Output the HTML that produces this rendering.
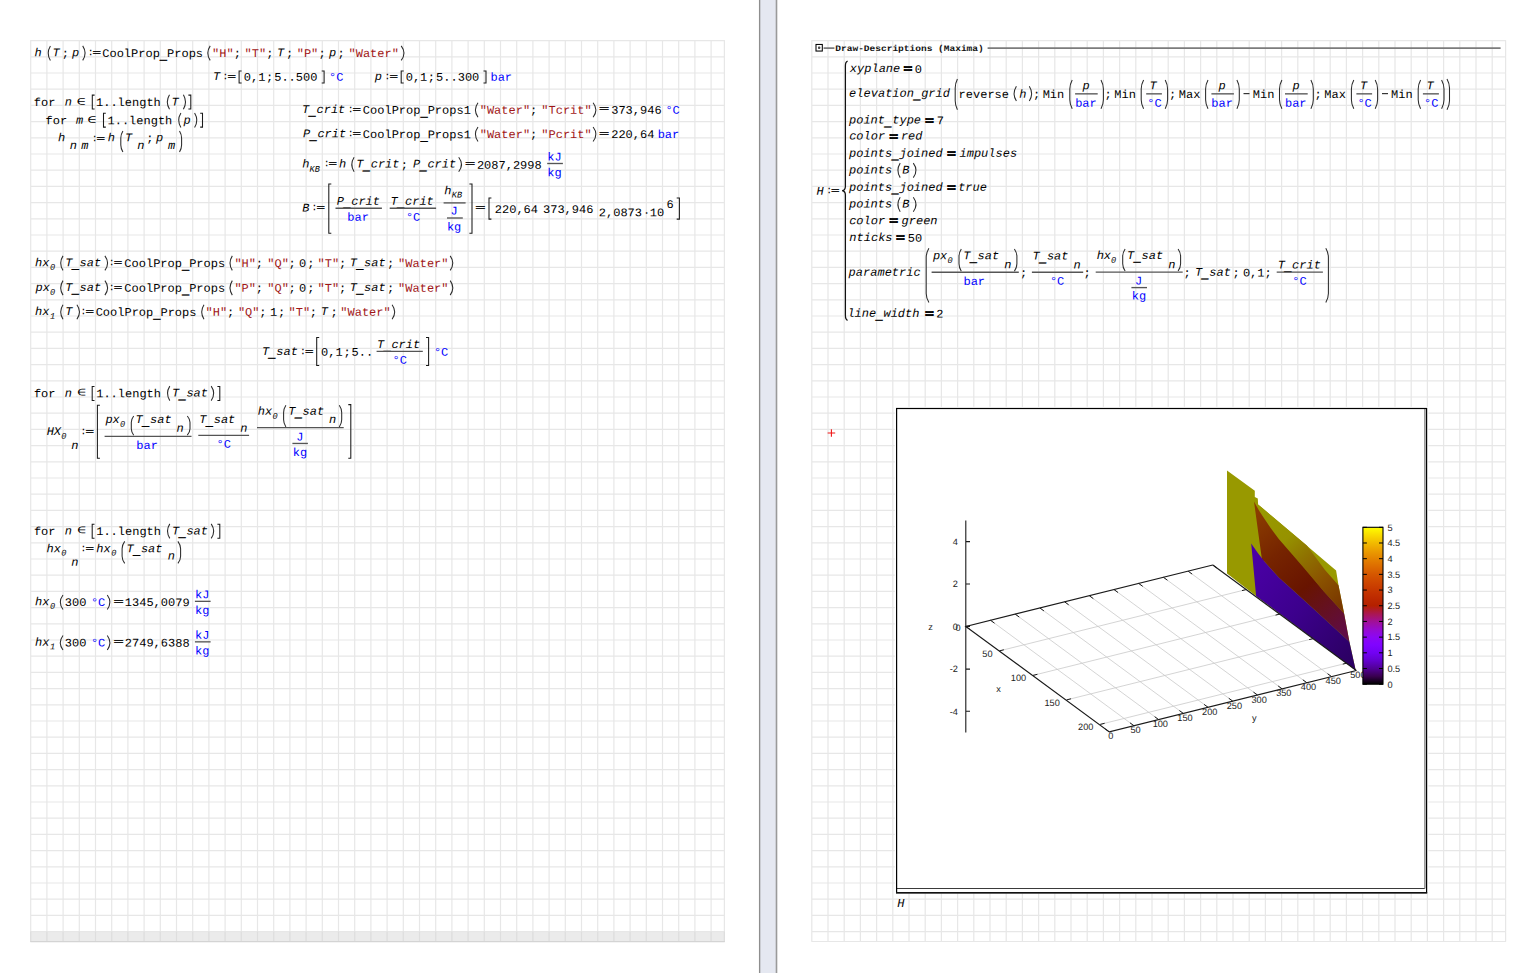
<!DOCTYPE html>
<html lang="en">
<head>
<meta charset="utf-8">
<title>SMath worksheet - CoolProp water properties</title>
<style>
html,body{margin:0;padding:0;background:#fff;}
body{width:1528px;height:973px;overflow:hidden;position:relative;font-family:"Liberation Mono",monospace;}
#divider{position:absolute;left:760px;top:0;width:16px;height:973px;background:#e5e8f1;}
svg{position:absolute;left:0;top:0;}
text{font-family:"Liberation Mono",monospace;font-size:12px;fill:#000;white-space:pre;text-rendering:geometricPrecision;}
.v{font-style:italic;}
.s{fill:#a01515;}
.u{fill:#0000ff;}
.sub{font-style:italic;font-size:8.6px;}
.el{font-family:"DejaVu Sans Mono","Liberation Mono",monospace;font-size:12px;}
.us{stroke:#000;stroke-width:0.45px;}
.fbold{font-weight:bold;}
.fheavy{font-weight:bold;stroke:#000;stroke-width:0.8px;}
.fmed{font-weight:bold;stroke:#000;stroke-width:0.32px;}
.hd{font-weight:bold;font-size:9.45px;fill:#111;}
.pl{fill:none;stroke:#2b2b2b;stroke-width:1.05;}
.bl{fill:none;stroke:#1a1a1a;stroke-width:1.05;}
.fb{fill:none;stroke:#555;stroke-width:1.35;}
.gr{fill:none;stroke:#e7e7e7;stroke-width:1.2;}
.grb{fill:none;stroke:#dedede;stroke-width:1.2;}
.pt text{font-family:"Liberation Sans",sans-serif;font-size:9.2px;fill:#222;}
</style>
</head>
<body>
<div id="divider"></div>
<svg id="sheet" width="1528" height="973" viewBox="0 0 1528 973">
<g id="splitter"><rect x="760" y="0" width="16" height="973" fill="#e5e8f1"/><rect x="758.95" y="0" width="1.35" height="973" fill="#8e8e8e"/><rect x="775.7" y="0" width="1.6" height="973" fill="#9a9a9a"/></g>
<g id="page-left-grid">
<rect x="30.3" y="40.2" width="694.5" height="901.6" fill="#fff"/>
<rect x="30.3" y="931.2" width="694.5" height="10.6" fill="#ebebeb"/>
<path d="M30.7 40.2V941.8M46.9 40.2V941.8M63.1 40.2V941.8M79.3 40.2V941.8M95.5 40.2V941.8M111.7 40.2V941.8M127.9 40.2V941.8M144.1 40.2V941.8M160.3 40.2V941.8M176.5 40.2V941.8M192.7 40.2V941.8M208.9 40.2V941.8M225.1 40.2V941.8M241.3 40.2V941.8M257.5 40.2V941.8M273.7 40.2V941.8M289.9 40.2V941.8M306.1 40.2V941.8M322.3 40.2V941.8M338.5 40.2V941.8M354.7 40.2V941.8M370.9 40.2V941.8M387.1 40.2V941.8M403.3 40.2V941.8M419.5 40.2V941.8M435.7 40.2V941.8M451.9 40.2V941.8M468.1 40.2V941.8M484.3 40.2V941.8M500.5 40.2V941.8M516.7 40.2V941.8M532.9 40.2V941.8M549.1 40.2V941.8M565.3 40.2V941.8M581.5 40.2V941.8M597.7 40.2V941.8M613.9 40.2V941.8M630.1 40.2V941.8M646.3 40.2V941.8M662.5 40.2V941.8M678.7 40.2V941.8M694.9 40.2V941.8M711.1 40.2V941.8M724.4 40.2V941.8M30.3 40.6H724.8M30.3 56.8H724.8M30.3 73H724.8M30.3 89.2H724.8M30.3 105.4H724.8M30.3 121.6H724.8M30.3 137.8H724.8M30.3 154H724.8M30.3 170.2H724.8M30.3 186.4H724.8M30.3 202.6H724.8M30.3 218.8H724.8M30.3 235H724.8M30.3 251.2H724.8M30.3 267.4H724.8M30.3 283.6H724.8M30.3 299.8H724.8M30.3 316H724.8M30.3 332.2H724.8M30.3 348.4H724.8M30.3 364.6H724.8M30.3 380.8H724.8M30.3 397H724.8M30.3 413.2H724.8M30.3 429.4H724.8M30.3 445.6H724.8M30.3 461.8H724.8M30.3 478H724.8M30.3 494.2H724.8M30.3 510.4H724.8M30.3 526.6H724.8M30.3 542.8H724.8M30.3 559H724.8M30.3 575.2H724.8M30.3 591.4H724.8M30.3 607.6H724.8M30.3 623.8H724.8M30.3 640H724.8M30.3 656.2H724.8M30.3 672.4H724.8M30.3 688.6H724.8M30.3 704.8H724.8M30.3 721H724.8M30.3 737.2H724.8M30.3 753.4H724.8M30.3 769.6H724.8M30.3 785.8H724.8M30.3 802H724.8M30.3 818.2H724.8M30.3 834.4H724.8M30.3 850.6H724.8M30.3 866.8H724.8M30.3 883H724.8M30.3 899.2H724.8M30.3 915.4H724.8M30.3 931.6H724.8M30.3 941.5H724.8" class="gr"/>
<path d="M30.7 931.4V941.8M46.9 931.4V941.8M63.1 931.4V941.8M79.3 931.4V941.8M95.5 931.4V941.8M111.7 931.4V941.8M127.9 931.4V941.8M144.1 931.4V941.8M160.3 931.4V941.8M176.5 931.4V941.8M192.7 931.4V941.8M208.9 931.4V941.8M225.1 931.4V941.8M241.3 931.4V941.8M257.5 931.4V941.8M273.7 931.4V941.8M289.9 931.4V941.8M306.1 931.4V941.8M322.3 931.4V941.8M338.5 931.4V941.8M354.7 931.4V941.8M370.9 931.4V941.8M387.1 931.4V941.8M403.3 931.4V941.8M419.5 931.4V941.8M435.7 931.4V941.8M451.9 931.4V941.8M468.1 931.4V941.8M484.3 931.4V941.8M500.5 931.4V941.8M516.7 931.4V941.8M532.9 931.4V941.8M549.1 931.4V941.8M565.3 931.4V941.8M581.5 931.4V941.8M597.7 931.4V941.8M613.9 931.4V941.8M630.1 931.4V941.8M646.3 931.4V941.8M662.5 931.4V941.8M678.7 931.4V941.8M694.9 931.4V941.8M711.1 931.4V941.8M724.4 931.4V941.8" class="grb"/>
<path d="M30.3 941.6H724.8" class="grb" style="stroke:#d4d4d4"/>
</g>
<g id="page-right-grid">
<rect x="811.4" y="40.2" width="694.6" height="901.6" fill="#fff"/>
<path d="M811.8 40.2V941.8M828 40.2V941.8M844.2 40.2V941.8M860.4 40.2V941.8M876.6 40.2V941.8M892.8 40.2V941.8M909 40.2V941.8M925.2 40.2V941.8M941.4 40.2V941.8M957.6 40.2V941.8M973.8 40.2V941.8M990 40.2V941.8M1006.2 40.2V941.8M1022.4 40.2V941.8M1038.6 40.2V941.8M1054.8 40.2V941.8M1071 40.2V941.8M1087.2 40.2V941.8M1103.4 40.2V941.8M1119.6 40.2V941.8M1135.8 40.2V941.8M1152 40.2V941.8M1168.2 40.2V941.8M1184.4 40.2V941.8M1200.6 40.2V941.8M1216.8 40.2V941.8M1233 40.2V941.8M1249.2 40.2V941.8M1265.4 40.2V941.8M1281.6 40.2V941.8M1297.8 40.2V941.8M1314 40.2V941.8M1330.2 40.2V941.8M1346.4 40.2V941.8M1362.6 40.2V941.8M1378.8 40.2V941.8M1395 40.2V941.8M1411.2 40.2V941.8M1427.4 40.2V941.8M1443.6 40.2V941.8M1459.8 40.2V941.8M1476 40.2V941.8M1492.2 40.2V941.8M1505.6 40.2V941.8M811.4 40.6H1506M811.4 56.8H1506M811.4 73H1506M811.4 89.2H1506M811.4 105.4H1506M811.4 121.6H1506M811.4 137.8H1506M811.4 154H1506M811.4 170.2H1506M811.4 186.4H1506M811.4 202.6H1506M811.4 218.8H1506M811.4 235H1506M811.4 251.2H1506M811.4 267.4H1506M811.4 283.6H1506M811.4 299.8H1506M811.4 316H1506M811.4 332.2H1506M811.4 348.4H1506M811.4 364.6H1506M811.4 380.8H1506M811.4 397H1506M811.4 413.2H1506M811.4 429.4H1506M811.4 445.6H1506M811.4 461.8H1506M811.4 478H1506M811.4 494.2H1506M811.4 510.4H1506M811.4 526.6H1506M811.4 542.8H1506M811.4 559H1506M811.4 575.2H1506M811.4 591.4H1506M811.4 607.6H1506M811.4 623.8H1506M811.4 640H1506M811.4 656.2H1506M811.4 672.4H1506M811.4 688.6H1506M811.4 704.8H1506M811.4 721H1506M811.4 737.2H1506M811.4 753.4H1506M811.4 769.6H1506M811.4 785.8H1506M811.4 802H1506M811.4 818.2H1506M811.4 834.4H1506M811.4 850.6H1506M811.4 866.8H1506M811.4 883H1506M811.4 899.2H1506M811.4 915.4H1506M811.4 931.6H1506M811.4 941.5H1506" class="gr"/>
</g>
<g id="page-left">
<text transform="translate(34.53 56.2) rotate(.03) scale(1 .97)" class="v">h</text>
<path d="M50.4 45.9 Q46 53.15 50.4 60.4" class="pl"/>
<text transform="translate(52.41 56.2) rotate(.03) scale(1 .97)" class="v">T</text>
<text transform="translate(61.8 57) rotate(.03) scale(1 .97)" class="f">;</text>
<text transform="translate(71.92 56.2) rotate(.03) scale(1 .97)" class="v">p</text>
<path d="M82.7 45.9 Q87.5 53.15 82.7 60.4" class="pl"/>
<text transform="translate(87.4 55.3) rotate(.03)" class="f" style="font-size:10.5px">:</text>
<text transform="translate(92.49 54.95) rotate(.03) scale(1.18 0.62)" class="fmed">=</text>
<text transform="translate(102.24 57) rotate(.03) scale(1 .97)" class="f">CoolProp<tspan dy="2.4" class="us">_</tspan><tspan dy="-2.4">Props</tspan></text>
<path d="M210.2 45.9 Q205.4 53.15 210.2 60.4" class="pl"/>
<text transform="translate(212.1 57) rotate(.03) scale(1 .97)" class="s">"H"</text>
<text transform="translate(233.8 57) rotate(.03) scale(1 .97)" class="f">;</text>
<text transform="translate(244.6 57) rotate(.03) scale(1 .97)" class="s">"T"</text>
<text transform="translate(266.3 57) rotate(.03) scale(1 .97)" class="f">;</text>
<text transform="translate(277.11 56.2) rotate(.03) scale(1 .97)" class="v">T</text>
<text transform="translate(285.9 57) rotate(.03) scale(1 .97)" class="f">;</text>
<text transform="translate(296.7 57) rotate(.03) scale(1 .97)" class="s">"P"</text>
<text transform="translate(318.5 57) rotate(.03) scale(1 .97)" class="f">;</text>
<text transform="translate(328.92 56.2) rotate(.03) scale(1 .97)" class="v">p</text>
<text transform="translate(337.4 57) rotate(.03) scale(1 .97)" class="f">;</text>
<text transform="translate(348.5 57) rotate(.03) scale(1 .97)" class="s">"Water"</text>
<path d="M401.2 45.9 Q406.8 53.15 401.2 60.4" class="pl"/>
<text transform="translate(213.11 80.05) rotate(.03) scale(1 .97)" class="v">T</text>
<text transform="translate(222.3 79.3) rotate(.03)" class="f" style="font-size:10.5px">:</text>
<text transform="translate(227.39 78.95) rotate(.03) scale(1.18 0.62)" class="fmed">=</text>
<path d="M241.6 70.9 H239.1 V82.9 H241.6" class="bl"/>
<text transform="translate(243.8 80.85) rotate(.03) scale(1 .97)" class="f">0,1</text>
<text transform="translate(265.9 80.85) rotate(.03) scale(1 .97)" class="f">;</text>
<text transform="translate(274.2 80.85) rotate(.03) scale(1 .97)" class="f">5..500</text>
<path d="M321.7 70.9 H324.1 V82.9 H321.7" class="bl"/>
<text transform="translate(329.1 80.85) rotate(.03) scale(1 .97)" class="u">°C</text>
<text transform="translate(374.82 80.05) rotate(.03) scale(1 .97)" class="v">p</text>
<text transform="translate(384.3 79.3) rotate(.03)" class="f" style="font-size:10.5px">:</text>
<text transform="translate(389.39 78.95) rotate(.03) scale(1.18 0.62)" class="fmed">=</text>
<path d="M403.7 70.9 H401.2 V82.9 H403.7" class="bl"/>
<text transform="translate(405.7 80.85) rotate(.03) scale(1 .97)" class="f">0,1</text>
<text transform="translate(427.8 80.85) rotate(.03) scale(1 .97)" class="f">;</text>
<text transform="translate(436.1 80.85) rotate(.03) scale(1 .97)" class="f">5..300</text>
<path d="M483.5 70.9 H486 V82.9 H483.5" class="bl"/>
<text transform="translate(490.45 80.85) rotate(.03) scale(1 .97)" class="u">bar</text>
<text transform="translate(33.79 105.9) rotate(.03) scale(1 .97)" class="f">for</text>
<text transform="translate(64.83 105.5) rotate(.03) scale(1 .97)" class="v">n</text>
<text transform="translate(76.43 104.8) rotate(.03) scale(1.28 0.79)" class="el">∈</text>
<path d="M94.6 95.1 H92.3 V108.9 H94.6" class="bl"/>
<text transform="translate(96 105.9) rotate(.03) scale(1 .97)" class="f">1..length</text>
<path d="M169.5 94.8 Q165.1 102.05 169.5 109.3" class="pl"/>
<text transform="translate(171.51 105.5) rotate(.03) scale(1 .97)" class="v">T</text>
<path d="M183.4 94.8 Q187.6 102.05 183.4 109.3" class="pl"/>
<path d="M188.4 95.1 H190.8 V108.9 H188.4" class="bl"/>
<text transform="translate(45.59 124.15) rotate(.03) scale(1 .97)" class="f">for</text>
<text transform="translate(76.1 123.75) rotate(.03) scale(1 .97)" class="v">m</text>
<text transform="translate(87.23 123.1) rotate(.03) scale(1.28 0.78)" class="el">∈</text>
<path d="M105.8 113.3 H103.5 V127.1 H105.8" class="bl"/>
<text transform="translate(107.5 124.15) rotate(.03) scale(1 .97)" class="f">1..length</text>
<path d="M180.9 113.05 Q176.5 120.3 180.9 127.55" class="pl"/>
<text transform="translate(183.42 123.75) rotate(.03) scale(1 .97)" class="v">p</text>
<path d="M194.6 113.05 Q199 120.3 194.6 127.55" class="pl"/>
<path d="M200.2 113.3 H202.5 V127.1 H200.2" class="bl"/>
<text transform="translate(58.03 141.2) rotate(.03) scale(1 .97)" class="v">h</text>
<text transform="translate(69.83 149.1) rotate(.03) scale(1 .97)" class="v">n</text>
<text transform="translate(81.3 149.1) rotate(.03) scale(1 .97)" class="v">m</text>
<text transform="translate(91.4 141.3) rotate(.03)" class="f" style="font-size:10.5px">:</text>
<text transform="translate(96.49 140.95) rotate(.03) scale(1.18 0.62)" class="fmed">=</text>
<text transform="translate(107.63 141.2) rotate(.03) scale(1 .97)" class="v">h</text>
<path d="M122.9 131 C121.43 133.43 120.8 135.16 120.8 137.93 L120.8 145.07 C120.8 147.84 121.43 149.57 122.9 152" class="pl"/>
<text transform="translate(125.01 141.2) rotate(.03) scale(1 .97)" class="v">T</text>
<text transform="translate(137.13 149.1) rotate(.03) scale(1 .97)" class="v">n</text>
<text transform="translate(146.2 141.7) rotate(.03) scale(1 .97)" class="f">;</text>
<text transform="translate(155.92 141.2) rotate(.03) scale(1 .97)" class="v">p</text>
<text transform="translate(168.1 149.1) rotate(.03) scale(1 .97)" class="v">m</text>
<path d="M179.5 131 C180.97 133.43 181.6 135.16 181.6 137.93 L181.6 145.07 C181.6 147.84 180.97 149.57 179.5 152" class="pl"/>
<text transform="translate(302.11 113) rotate(.03) scale(1 .97)" class="v">T<tspan dy="2.4" class="us">_</tspan><tspan dy="-2.4">crit</tspan></text>
<text transform="translate(347.4 112.3) rotate(.03)" class="f" style="font-size:10.5px">:</text>
<text transform="translate(352.49 111.95) rotate(.03) scale(1.18 0.62)" class="fmed">=</text>
<text transform="translate(362.84 113.8) rotate(.03) scale(1 .97)" class="f">CoolProp<tspan dy="2.4" class="us">_</tspan><tspan dy="-2.4">Props1</tspan></text>
<path d="M478 102.7 Q472.8 109.95 478 117.2" class="pl"/>
<text transform="translate(479.7 113.8) rotate(.03) scale(1 .97)" class="s">"Water"</text>
<text transform="translate(529.9 113.8) rotate(.03) scale(1 .97)" class="f">;</text>
<text transform="translate(541.3 113.8) rotate(.03) scale(1 .97)" class="s">"Tcrit"</text>
<path d="M593.1 102.7 Q598.7 109.95 593.1 117.2" class="pl"/>
<text transform="translate(599.09 110.95) rotate(.03) scale(1.42 0.62)" class="fmed">=</text>
<text transform="translate(611.2 113.8) rotate(.03) scale(1 .97)" class="f">373,946</text>
<text transform="translate(665.4 113.8) rotate(.03) scale(1 .97)" class="u">°C</text>
<text transform="translate(302.97 137.3) rotate(.03) scale(1 .97)" class="v">P<tspan dy="2.4" class="us">_</tspan><tspan dy="-2.4">crit</tspan></text>
<text transform="translate(347.4 136.3) rotate(.03)" class="f" style="font-size:10.5px">:</text>
<text transform="translate(352.49 135.95) rotate(.03) scale(1.18 0.62)" class="fmed">=</text>
<text transform="translate(362.84 138.1) rotate(.03) scale(1 .97)" class="f">CoolProp<tspan dy="2.4" class="us">_</tspan><tspan dy="-2.4">Props1</tspan></text>
<path d="M478 127 Q472.8 134.25 478 141.5" class="pl"/>
<text transform="translate(479.7 138.1) rotate(.03) scale(1 .97)" class="s">"Water"</text>
<text transform="translate(529.9 138.1) rotate(.03) scale(1 .97)" class="f">;</text>
<text transform="translate(541.3 138.1) rotate(.03) scale(1 .97)" class="s">"Pcrit"</text>
<path d="M593.1 127 Q598.7 134.25 593.1 141.5" class="pl"/>
<text transform="translate(599.09 135.95) rotate(.03) scale(1.42 0.62)" class="fmed">=</text>
<text transform="translate(611.2 138.1) rotate(.03) scale(1 .97)" class="f">220,64</text>
<text transform="translate(657.65 138.1) rotate(.03) scale(1 .97)" class="u">bar</text>
<text transform="translate(302.13 167.6) rotate(.03) scale(1 .97)" class="v">h</text>
<text transform="translate(309.6 171.8) rotate(.03)" class="sub">KB</text>
<text transform="translate(323.5 166.3) rotate(.03)" class="f" style="font-size:10.5px">:</text>
<text transform="translate(328.59 165.95) rotate(.03) scale(1.18 0.62)" class="fmed">=</text>
<text transform="translate(339.03 167.6) rotate(.03) scale(1 .97)" class="v">h</text>
<path d="M354.1 157.3 Q349.5 164.55 354.1 171.8" class="pl"/>
<text transform="translate(356.31 167.6) rotate(.03) scale(1 .97)" class="v">T<tspan dy="2.4" class="us">_</tspan><tspan dy="-2.4">crit</tspan></text>
<text transform="translate(400.7 168.4) rotate(.03) scale(1 .97)" class="f">;</text>
<text transform="translate(412.97 167.6) rotate(.03) scale(1 .97)" class="v">P<tspan dy="2.4" class="us">_</tspan><tspan dy="-2.4">crit</tspan></text>
<path d="M458.7 157.3 Q464.3 164.55 458.7 171.8" class="pl"/>
<text transform="translate(465.09 165.95) rotate(.03) scale(1.42 0.62)" class="fmed">=</text>
<text transform="translate(476.9 168.7) rotate(.03) scale(1 .97)" class="f">2087,2998</text>
<text transform="translate(547.32 160.6) rotate(.03) scale(1 .97)" class="u">kJ</text>
<path d="M547.2 163.5H562.9" class="fb"/>
<text transform="translate(547.32 176.2) rotate(.03) scale(1 .97)" class="u">kg</text>
<text transform="translate(302.27 211.55) rotate(.03) scale(1 .97)" class="v">B</text>
<text transform="translate(311.3 210.3) rotate(.03)" class="f" style="font-size:10.5px">:</text>
<text transform="translate(316.39 209.95) rotate(.03) scale(1.18 0.62)" class="fmed">=</text>
<path d="M331.3 183.9 H328.8 V233.3 H331.3" class="bl"/>
<text transform="translate(336.77 204.75) rotate(.03) scale(1 .97)" class="v">P<tspan dy="2.4" class="us">_</tspan><tspan dy="-2.4">crit</tspan></text>
<path d="M335.5 208.2H381.9" class="fb"/>
<text transform="translate(347.35 220.7) rotate(.03) scale(1 .97)" class="u">bar</text>
<text transform="translate(390.61 204.75) rotate(.03) scale(1 .97)" class="v">T<tspan dy="2.4" class="us">_</tspan><tspan dy="-2.4">crit</tspan></text>
<path d="M389.7 208.2H436.1" class="fb"/>
<text transform="translate(405.9 220.7) rotate(.03) scale(1 .97)" class="u">°C</text>
<text transform="translate(444.23 194.2) rotate(.03) scale(1 .97)" class="v">h</text>
<text transform="translate(451.8 197.6) rotate(.03)" class="sub">KB</text>
<path d="M443.6 202.9H465.6" class="fb"/>
<text transform="translate(450.47 214.5) rotate(.03) scale(1 .97)" class="u">J</text>
<path d="M447 218H462.8" class="fb"/>
<text transform="translate(446.92 230.6) rotate(.03) scale(1 .97)" class="u">kg</text>
<path d="M469.4 183.9 H472 V233.3 H469.4" class="bl"/>
<text transform="translate(475.19 209.95) rotate(.03) scale(1.42 0.62)" class="fmed">=</text>
<path d="M491.4 197.9 H489 V219.1 H491.4" class="bl"/>
<text transform="translate(494.8 213.1) rotate(.03) scale(1 .97)" class="f">220,64</text>
<text transform="translate(543 213.1) rotate(.03) scale(1 .97)" class="f">373,946</text>
<text transform="translate(598.8 216.3) rotate(.03) scale(1 .97)" class="f">2,0873</text>
<text transform="translate(643 216.3) rotate(.03) scale(1 .97)" class="f">·</text>
<text transform="translate(649.8 216.3) rotate(.03) scale(1 .97)" class="f">10</text>
<text transform="translate(666.6 208.1) rotate(.03) scale(1 .97)" class="f">6</text>
<path d="M676.7 197.9 H679.4 V219.1 H676.7" class="bl"/>
<text transform="translate(35.03 266.15) rotate(.03) scale(1 .97)" class="v">hx</text>
<text transform="translate(49.9 269.85) rotate(.03)" class="sub">0</text>
<path d="M63 255.85 Q58.4 263.1 63 270.35" class="pl"/>
<text transform="translate(65.21 266.15) rotate(.03) scale(1 .97)" class="v">T<tspan dy="2.4" class="us">_</tspan><tspan dy="-2.4">sat</tspan></text>
<path d="M104.9 255.85 Q110.3 263.1 104.9 270.35" class="pl"/>
<text transform="translate(108.6 265.3) rotate(.03)" class="f" style="font-size:10.5px">:</text>
<text transform="translate(113.69 264.95) rotate(.03) scale(1.18 0.62)" class="fmed">=</text>
<text transform="translate(124.34 266.95) rotate(.03) scale(1 .97)" class="f">CoolProp<tspan dy="2.4" class="us">_</tspan><tspan dy="-2.4">Props</tspan></text>
<path d="M232.3 255.85 Q227.7 263.1 232.3 270.35" class="pl"/>
<text transform="translate(234.4 266.95) rotate(.03) scale(1 .97)" class="s">"H"</text>
<text transform="translate(255.7 266.95) rotate(.03) scale(1 .97)" class="f">;</text>
<text transform="translate(267.3 266.95) rotate(.03) scale(1 .97)" class="s">"Q"</text>
<text transform="translate(288.6 266.95) rotate(.03) scale(1 .97)" class="f">;</text>
<text transform="translate(298.9 266.95) rotate(.03) scale(1 .97)" class="f">0</text>
<text transform="translate(307.2 266.95) rotate(.03) scale(1 .97)" class="f">;</text>
<text transform="translate(317.5 266.95) rotate(.03) scale(1 .97)" class="s">"T"</text>
<text transform="translate(338.9 266.95) rotate(.03) scale(1 .97)" class="f">;</text>
<text transform="translate(349.71 266.15) rotate(.03) scale(1 .97)" class="v">T<tspan dy="2.4" class="us">_</tspan><tspan dy="-2.4">sat</tspan></text>
<text transform="translate(387 266.95) rotate(.03) scale(1 .97)" class="f">;</text>
<text transform="translate(398.1 266.95) rotate(.03) scale(1 .97)" class="s">"Water"</text>
<path d="M450.2 255.85 Q455.4 263.1 450.2 270.35" class="pl"/>
<text transform="translate(35.52 290.95) rotate(.03) scale(1 .97)" class="v">px</text>
<text transform="translate(49.9 294.65) rotate(.03)" class="sub">0</text>
<path d="M63 280.65 Q58.4 287.9 63 295.15" class="pl"/>
<text transform="translate(65.21 290.95) rotate(.03) scale(1 .97)" class="v">T<tspan dy="2.4" class="us">_</tspan><tspan dy="-2.4">sat</tspan></text>
<path d="M104.9 280.65 Q110.3 287.9 104.9 295.15" class="pl"/>
<text transform="translate(108.6 290.3) rotate(.03)" class="f" style="font-size:10.5px">:</text>
<text transform="translate(113.69 289.95) rotate(.03) scale(1.18 0.62)" class="fmed">=</text>
<text transform="translate(124.34 291.75) rotate(.03) scale(1 .97)" class="f">CoolProp<tspan dy="2.4" class="us">_</tspan><tspan dy="-2.4">Props</tspan></text>
<path d="M232.3 280.65 Q227.7 287.9 232.3 295.15" class="pl"/>
<text transform="translate(234.4 291.75) rotate(.03) scale(1 .97)" class="s">"P"</text>
<text transform="translate(255.7 291.75) rotate(.03) scale(1 .97)" class="f">;</text>
<text transform="translate(267.3 291.75) rotate(.03) scale(1 .97)" class="s">"Q"</text>
<text transform="translate(288.6 291.75) rotate(.03) scale(1 .97)" class="f">;</text>
<text transform="translate(298.9 291.75) rotate(.03) scale(1 .97)" class="f">0</text>
<text transform="translate(307.2 291.75) rotate(.03) scale(1 .97)" class="f">;</text>
<text transform="translate(317.5 291.75) rotate(.03) scale(1 .97)" class="s">"T"</text>
<text transform="translate(338.9 291.75) rotate(.03) scale(1 .97)" class="f">;</text>
<text transform="translate(349.71 290.95) rotate(.03) scale(1 .97)" class="v">T<tspan dy="2.4" class="us">_</tspan><tspan dy="-2.4">sat</tspan></text>
<text transform="translate(387 291.75) rotate(.03) scale(1 .97)" class="f">;</text>
<text transform="translate(398.1 291.75) rotate(.03) scale(1 .97)" class="s">"Water"</text>
<path d="M450.2 280.65 Q455.4 287.9 450.2 295.15" class="pl"/>
<text transform="translate(35.03 315.05) rotate(.03) scale(1 .97)" class="v">hx</text>
<text transform="translate(49.9 318.75) rotate(.03)" class="sub">1</text>
<path d="M63 304.75 Q58.4 312 63 319.25" class="pl"/>
<text transform="translate(65.21 315.05) rotate(.03) scale(1 .97)" class="v">T</text>
<path d="M76.9 304.75 Q82.1 312 76.9 319.25" class="pl"/>
<text transform="translate(80.3 314.3) rotate(.03)" class="f" style="font-size:10.5px">:</text>
<text transform="translate(85.39 313.95) rotate(.03) scale(1.18 0.62)" class="fmed">=</text>
<text transform="translate(95.64 315.85) rotate(.03) scale(1 .97)" class="f">CoolProp<tspan dy="2.4" class="us">_</tspan><tspan dy="-2.4">Props</tspan></text>
<path d="M204 304.75 Q199.4 312 204 319.25" class="pl"/>
<text transform="translate(205.6 315.85) rotate(.03) scale(1 .97)" class="s">"H"</text>
<text transform="translate(226.9 315.85) rotate(.03) scale(1 .97)" class="f">;</text>
<text transform="translate(237.9 315.85) rotate(.03) scale(1 .97)" class="s">"Q"</text>
<text transform="translate(259.3 315.85) rotate(.03) scale(1 .97)" class="f">;</text>
<text transform="translate(270.1 315.85) rotate(.03) scale(1 .97)" class="f">1</text>
<text transform="translate(277.9 315.85) rotate(.03) scale(1 .97)" class="f">;</text>
<text transform="translate(288.5 315.85) rotate(.03) scale(1 .97)" class="s">"T"</text>
<text transform="translate(309.8 315.85) rotate(.03) scale(1 .97)" class="f">;</text>
<text transform="translate(320.71 315.05) rotate(.03) scale(1 .97)" class="v">T</text>
<text transform="translate(330.5 315.85) rotate(.03) scale(1 .97)" class="f">;</text>
<text transform="translate(340.3 315.85) rotate(.03) scale(1 .97)" class="s">"Water"</text>
<path d="M392.1 304.75 Q397.3 312 392.1 319.25" class="pl"/>
<text transform="translate(261.91 354.95) rotate(.03) scale(1 .97)" class="v">T<tspan dy="2.4" class="us">_</tspan><tspan dy="-2.4">sat</tspan></text>
<text transform="translate(299.8 354.3) rotate(.03)" class="f" style="font-size:10.5px">:</text>
<text transform="translate(304.89 353.95) rotate(.03) scale(1.18 0.62)" class="fmed">=</text>
<path d="M319.2 337.5 H316.7 V365.4 H319.2" class="bl"/>
<text transform="translate(321 355.75) rotate(.03) scale(1 .97)" class="f">0,1</text>
<text transform="translate(343.4 355.75) rotate(.03) scale(1 .97)" class="f">;</text>
<text transform="translate(351.5 355.75) rotate(.03) scale(1 .97)" class="f">5..</text>
<text transform="translate(377.01 347.95) rotate(.03) scale(1 .97)" class="v">T<tspan dy="2.4" class="us">_</tspan><tspan dy="-2.4">crit</tspan></text>
<path d="M376.6 351.4H422.8" class="fb"/>
<text transform="translate(392.6 363.7) rotate(.03) scale(1 .97)" class="u">°C</text>
<path d="M426 337.5 H428.6 V365.4 H426" class="bl"/>
<text transform="translate(433.9 355.8) rotate(.03) scale(1 .97)" class="u">°C</text>
<text transform="translate(33.89 397.2) rotate(.03) scale(1 .97)" class="f">for</text>
<text transform="translate(64.83 396.8) rotate(.03) scale(1 .97)" class="v">n</text>
<text transform="translate(76.93 395.4) rotate(.03) scale(1.28 0.79)" class="el">∈</text>
<path d="M94.5 386.4 H92.2 V400.4 H94.5" class="bl"/>
<text transform="translate(96.2 397.2) rotate(.03) scale(1 .97)" class="f">1..length</text>
<path d="M169.8 386.1 Q165.2 393.35 169.8 400.6" class="pl"/>
<text transform="translate(172.01 396.6) rotate(.03) scale(1 .97)" class="v">T<tspan dy="2.4" class="us">_</tspan><tspan dy="-2.4">sat</tspan></text>
<path d="M211.2 386.1 Q216.2 393.35 211.2 400.6" class="pl"/>
<path d="M217.4 386.4 H219.8 V400.4 H217.4" class="bl"/>
<text transform="translate(33.89 535) rotate(.03) scale(1 .97)" class="f">for</text>
<text transform="translate(64.83 534.6) rotate(.03) scale(1 .97)" class="v">n</text>
<text transform="translate(76.93 533.2) rotate(.03) scale(1.28 0.79)" class="el">∈</text>
<path d="M94.5 524.2 H92.2 V538.2 H94.5" class="bl"/>
<text transform="translate(96.2 535) rotate(.03) scale(1 .97)" class="f">1..length</text>
<path d="M169.8 523.9 Q165.2 531.15 169.8 538.4" class="pl"/>
<text transform="translate(172.01 534.4) rotate(.03) scale(1 .97)" class="v">T<tspan dy="2.4" class="us">_</tspan><tspan dy="-2.4">sat</tspan></text>
<path d="M211.2 523.9 Q216.2 531.15 211.2 538.4" class="pl"/>
<path d="M217.4 524.2 H219.8 V538.2 H217.4" class="bl"/>
<text transform="translate(46.67 435) rotate(.03) scale(1 .97)" class="v">HX</text>
<text transform="translate(61.2 438.8) rotate(.03)" class="sub">0</text>
<text transform="translate(71.13 448.95) rotate(.03) scale(1 .97)" class="v">n</text>
<text transform="translate(80.3 434.3) rotate(.03)" class="f" style="font-size:10.5px">:</text>
<text transform="translate(85.39 433.95) rotate(.03) scale(1.18 0.62)" class="fmed">=</text>
<path d="M99.9 405.2 H97.4 V458.2 H99.9" class="bl"/>
<text transform="translate(105.42 423.05) rotate(.03) scale(1 .97)" class="v">px</text>
<text transform="translate(120.1 426.8) rotate(.03)" class="sub">0</text>
<path d="M133.7 416 C132.02 418.22 131.3 419.8 131.3 422.34 L131.3 428.86 C131.3 431.4 132.02 432.98 133.7 435.2" class="pl"/>
<text transform="translate(135.61 423.05) rotate(.03) scale(1 .97)" class="v">T<tspan dy="2.4" class="us">_</tspan><tspan dy="-2.4">sat</tspan></text>
<text transform="translate(176.43 431.7) rotate(.03) scale(1 .97)" class="v">n</text>
<path d="M187.3 416 C189.19 418.22 190 419.8 190 422.34 L190 428.86 C190 431.4 189.19 432.98 187.3 435.2" class="pl"/>
<path d="M104.6 436.3H191.5" class="fb"/>
<text transform="translate(136.25 449) rotate(.03) scale(1 .97)" class="u">bar</text>
<text transform="translate(199.31 423.05) rotate(.03) scale(1 .97)" class="v">T<tspan dy="2.4" class="us">_</tspan><tspan dy="-2.4">sat</tspan></text>
<text transform="translate(240.13 431.7) rotate(.03) scale(1 .97)" class="v">n</text>
<path d="M198.3 435.4H249.1" class="fb"/>
<text transform="translate(216.5 447.7) rotate(.03) scale(1 .97)" class="u">°C</text>
<text transform="translate(257.83 414.65) rotate(.03) scale(1 .97)" class="v">hx</text>
<text transform="translate(272.5 418.7) rotate(.03)" class="sub">0</text>
<path d="M285.9 405.2 C284.29 407.72 283.6 409.52 283.6 412.39 L283.6 419.81 C283.6 422.68 284.29 424.48 285.9 427" class="pl"/>
<text transform="translate(288.21 414.65) rotate(.03) scale(1 .97)" class="v">T<tspan dy="2.4" class="us">_</tspan><tspan dy="-2.4">sat</tspan></text>
<text transform="translate(329.03 423.05) rotate(.03) scale(1 .97)" class="v">n</text>
<path d="M339.3 405.2 C340.98 407.72 341.7 409.52 341.7 412.39 L341.7 419.81 C341.7 422.68 340.98 424.48 339.3 427" class="pl"/>
<path d="M257 427.65H343.7" class="fb"/>
<text transform="translate(296.17 440.6) rotate(.03) scale(1 .97)" class="u">J</text>
<path d="M292.4 443.45H307.9" class="fb"/>
<text transform="translate(292.82 456) rotate(.03) scale(1 .97)" class="u">kg</text>
<path d="M348.3 404.6 H350.8 V458.2 H348.3" class="bl"/>
<text transform="translate(46.53 552.15) rotate(.03) scale(1 .97)" class="v">hx</text>
<text transform="translate(61.2 555.5) rotate(.03)" class="sub">0</text>
<text transform="translate(71.13 565.8) rotate(.03) scale(1 .97)" class="v">n</text>
<text transform="translate(80.3 551.3) rotate(.03)" class="f" style="font-size:10.5px">:</text>
<text transform="translate(85.39 550.95) rotate(.03) scale(1.18 0.62)" class="fmed">=</text>
<text transform="translate(96.33 552.15) rotate(.03) scale(1 .97)" class="v">hx</text>
<text transform="translate(111.2 555.5) rotate(.03)" class="sub">0</text>
<path d="M124.7 541.4 C122.88 543.94 122.1 545.76 122.1 548.66 L122.1 556.14 C122.1 559.04 122.88 560.86 124.7 563.4" class="pl"/>
<text transform="translate(126.51 552.15) rotate(.03) scale(1 .97)" class="v">T<tspan dy="2.4" class="us">_</tspan><tspan dy="-2.4">sat</tspan></text>
<text transform="translate(167.73 559.5) rotate(.03) scale(1 .97)" class="v">n</text>
<path d="M177.9 541.4 C179.79 543.94 180.6 545.76 180.6 548.66 L180.6 556.14 C180.6 559.04 179.79 560.86 177.9 563.4" class="pl"/>
<text transform="translate(35.03 605.3) rotate(.03) scale(1 .97)" class="v">hx</text>
<text transform="translate(49.9 608.7) rotate(.03)" class="sub">0</text>
<path d="M63 595 Q57.6 602.25 63 609.5" class="pl"/>
<text transform="translate(64.8 606.1) rotate(.03) scale(1 .97)" class="f">300</text>
<text transform="translate(90.9 606.1) rotate(.03) scale(1 .97)" class="u">°C</text>
<path d="M107.3 595 Q112.5 602.25 107.3 609.5" class="pl"/>
<text transform="translate(113.39 603.95) rotate(.03) scale(1.42 0.62)" class="fmed">=</text>
<text transform="translate(124.8 606.1) rotate(.03) scale(1 .97)" class="f">1345,0079</text>
<text transform="translate(195.12 598.2) rotate(.03) scale(1 .97)" class="u">kJ</text>
<path d="M194.9 601.35H210.6" class="fb"/>
<text transform="translate(195.12 614.1) rotate(.03) scale(1 .97)" class="u">kg</text>
<text transform="translate(35.03 645.8) rotate(.03) scale(1 .97)" class="v">hx</text>
<text transform="translate(49.9 649.2) rotate(.03)" class="sub">1</text>
<path d="M63 635.5 Q57.6 642.75 63 650" class="pl"/>
<text transform="translate(64.8 646.6) rotate(.03) scale(1 .97)" class="f">300</text>
<text transform="translate(90.9 646.6) rotate(.03) scale(1 .97)" class="u">°C</text>
<path d="M107.3 635.5 Q112.5 642.75 107.3 650" class="pl"/>
<text transform="translate(113.39 643.95) rotate(.03) scale(1.42 0.62)" class="fmed">=</text>
<text transform="translate(124.8 646.6) rotate(.03) scale(1 .97)" class="f">2749,6388</text>
<text transform="translate(195.12 638.7) rotate(.03) scale(1 .97)" class="u">kJ</text>
<path d="M194.9 641.85H210.6" class="fb"/>
<text transform="translate(195.12 654.6) rotate(.03) scale(1 .97)" class="u">kg</text>
</g>
<g id="page-right">
<rect x="816.0" y="44.45" width="6.3" height="6.6" fill="#fff" stroke="#000" stroke-width="1.05"/>
<rect x="818.0" y="46.6" width="2.3" height="2.3" rx="0.7" fill="#4a4a4a"/>
<path d="M823.6 48.1H834.4M987.6 48.1H1500.6" stroke="#7c7c7c" stroke-width="1.8"/>
<text transform="translate(835.3 51.15) scale(1.008 .9)" class="hd">Draw-Descriptions (Maxima)</text>
<text transform="translate(816.47 194.65) rotate(.03) scale(1 .97)" class="v">H</text>
<text transform="translate(826 193.3) rotate(.03)" class="f" style="font-size:10.5px">:</text>
<text transform="translate(831.09 192.95) rotate(.03) scale(1.18 0.62)" class="fmed">=</text>
<path d="M847.6 61.2 C845.8 61.8 845.4 63.5 845.4 66 L845.4 186.5 C845.4 188.8 844.4 190.2 842.2 190.7 C844.4 191.2 845.4 192.6 845.4 194.9 L845.4 315.5 C845.4 318 845.8 319.7 847.6 320.3" class="pl" style="stroke:#111;stroke-width:1.25"/>
<text transform="translate(849.86 72.05) rotate(.03) scale(1 .97)" class="v">xyplane</text>
<text transform="translate(903.56 72.18) rotate(.03) scale(1.23 0.93)" class="fheavy">=</text>
<text transform="translate(914.7 72.95) rotate(.03) scale(1 .97)" class="f">0</text>
<text transform="translate(849.12 96.75) rotate(.03) scale(1 .97)" class="v">elevation<tspan dy="2.4" class="us">_</tspan><tspan dy="-2.4">grid</tspan></text>
<path d="M957.4 78.9 C955.86 82.05 955.2 84.3 955.2 87.9 L955.2 100.8 C955.2 104.4 955.86 106.65 957.4 109.8" class="pl"/>
<text transform="translate(958.58 97.95) rotate(.03) scale(1 .97)" class="f">reverse</text>
<path d="M1016.4 86.2 Q1011.8 93.6 1016.4 101" class="pl"/>
<text transform="translate(1019.13 97.65) rotate(.03) scale(1 .97)" class="v">h</text>
<path d="M1029.3 86.2 Q1033.9 93.6 1029.3 101" class="pl"/>
<text transform="translate(1033 97.95) rotate(.03) scale(1 .97)" class="f">;</text>
<text transform="translate(1042.64 97.95) rotate(.03) scale(1 .97)" class="f">Min</text>
<path d="M1072.2 79.9 C1070.52 83.05 1069.8 85.3 1069.8 88.9 L1069.8 99.8 C1069.8 103.4 1070.52 105.65 1072.2 108.8" class="pl"/>
<text transform="translate(1082.52 89.25) rotate(.03) scale(1 .97)" class="v">p</text>
<path d="M1075.1 93.85H1097.7" class="fb"/>
<text transform="translate(1075.15 106.85) rotate(.03) scale(1 .97)" class="u">bar</text>
<path d="M1101 79.9 C1102.68 83.05 1103.4 85.3 1103.4 88.9 L1103.4 99.8 C1103.4 103.4 1102.68 105.65 1101 108.8" class="pl"/>
<text transform="translate(1104.4 97.95) rotate(.03) scale(1 .97)" class="f">;</text>
<text transform="translate(1114.34 97.95) rotate(.03) scale(1 .97)" class="f">Min</text>
<path d="M1143.6 79.9 C1141.92 83.05 1141.2 85.3 1141.2 88.9 L1141.2 99.8 C1141.2 103.4 1141.92 105.65 1143.6 108.8" class="pl"/>
<text transform="translate(1149.41 89.25) rotate(.03) scale(1 .97)" class="v">T</text>
<path d="M1146.2 93.85H1161.9" class="fb"/>
<text transform="translate(1147.2 106.85) rotate(.03) scale(1 .97)" class="u">°C</text>
<path d="M1165.2 79.9 C1166.88 83.05 1167.6 85.3 1167.6 88.9 L1167.6 99.8 C1167.6 103.4 1166.88 105.65 1165.2 108.8" class="pl"/>
<text transform="translate(1169 97.95) rotate(.03) scale(1 .97)" class="f">;</text>
<text transform="translate(1178.74 97.95) rotate(.03) scale(1 .97)" class="f">Max</text>
<path d="M1208 79.9 C1206.32 83.05 1205.6 85.3 1205.6 88.9 L1205.6 99.8 C1205.6 103.4 1206.32 105.65 1208 108.8" class="pl"/>
<text transform="translate(1218.52 89.25) rotate(.03) scale(1 .97)" class="v">p</text>
<path d="M1211.4 93.85H1233.9" class="fb"/>
<text transform="translate(1211.35 106.85) rotate(.03) scale(1 .97)" class="u">bar</text>
<path d="M1236.9 79.9 C1238.58 83.05 1239.3 85.3 1239.3 88.9 L1239.3 99.8 C1239.3 103.4 1238.58 105.65 1236.9 108.8" class="pl"/>
<path d="M1243.5 93.65H1249.5" class="bl"/>
<text transform="translate(1252.74 97.95) rotate(.03) scale(1 .97)" class="f">Min</text>
<path d="M1281.9 79.9 C1280.22 83.05 1279.5 85.3 1279.5 88.9 L1279.5 99.8 C1279.5 103.4 1280.22 105.65 1281.9 108.8" class="pl"/>
<text transform="translate(1292.52 89.25) rotate(.03) scale(1 .97)" class="v">p</text>
<path d="M1285 93.85H1307.7" class="fb"/>
<text transform="translate(1284.95 106.85) rotate(.03) scale(1 .97)" class="u">bar</text>
<path d="M1310.9 79.9 C1312.58 83.05 1313.3 85.3 1313.3 88.9 L1313.3 99.8 C1313.3 103.4 1312.58 105.65 1310.9 108.8" class="pl"/>
<text transform="translate(1314.5 97.95) rotate(.03) scale(1 .97)" class="f">;</text>
<text transform="translate(1324.24 97.95) rotate(.03) scale(1 .97)" class="f">Max</text>
<path d="M1353.8 79.9 C1352.12 83.05 1351.4 85.3 1351.4 88.9 L1351.4 99.8 C1351.4 103.4 1352.12 105.65 1353.8 108.8" class="pl"/>
<text transform="translate(1359.91 89.25) rotate(.03) scale(1 .97)" class="v">T</text>
<path d="M1356.4 93.85H1372.1" class="fb"/>
<text transform="translate(1357.4 106.85) rotate(.03) scale(1 .97)" class="u">°C</text>
<path d="M1375.2 79.9 C1376.88 83.05 1377.6 85.3 1377.6 88.9 L1377.6 99.8 C1377.6 103.4 1376.88 105.65 1375.2 108.8" class="pl"/>
<path d="M1382 93.65H1388" class="bl"/>
<text transform="translate(1391.04 97.95) rotate(.03) scale(1 .97)" class="f">Min</text>
<path d="M1420.6 79.9 C1418.92 83.05 1418.2 85.3 1418.2 88.9 L1418.2 99.8 C1418.2 103.4 1418.92 105.65 1420.6 108.8" class="pl"/>
<text transform="translate(1426.41 89.25) rotate(.03) scale(1 .97)" class="v">T</text>
<path d="M1422.9 93.85H1438.9" class="fb"/>
<text transform="translate(1424.1 106.85) rotate(.03) scale(1 .97)" class="u">°C</text>
<path d="M1441.6 79.9 C1443.28 83.05 1444 85.3 1444 88.9 L1444 99.8 C1444 103.4 1443.28 105.65 1441.6 108.8" class="pl"/>
<path d="M1447 78.9 C1448.75 82.05 1449.5 84.3 1449.5 87.9 L1449.5 100.8 C1449.5 104.4 1448.75 106.65 1447 109.8" class="pl"/>
<text transform="translate(849.02 123.53) rotate(.03) scale(1 .97)" class="v">point<tspan dy="2.4" class="us">_</tspan><tspan dy="-2.4">type</tspan></text>
<text transform="translate(925.06 124.18) rotate(.03) scale(1.23 0.93)" class="fheavy">=</text>
<text transform="translate(936.7 124.18) rotate(.03) scale(1 .97)" class="f">7</text>
<text transform="translate(849.14 139.58) rotate(.03) scale(1 .97)" class="v">color</text>
<text transform="translate(889.26 140.18) rotate(.03) scale(1.23 0.93)" class="fheavy">=</text>
<text transform="translate(900.89 139.58) rotate(.03) scale(1 .97)" class="v">red</text>
<text transform="translate(849.02 156.7) rotate(.03) scale(1 .97)" class="v">points<tspan dy="2.4" class="us">_</tspan><tspan dy="-2.4">joined</tspan></text>
<text transform="translate(947.06 157.18) rotate(.03) scale(1.23 0.93)" class="fheavy">=</text>
<text transform="translate(959.48 156.7) rotate(.03) scale(1 .97)" class="v">impulses</text>
<text transform="translate(849.02 173.4) rotate(.03) scale(1 .97)" class="v">points</text>
<path d="M900.2 163.1 Q895.6 170.35 900.2 177.6" class="pl"/>
<text transform="translate(902.37 173.4) rotate(.03) scale(1 .97)" class="v">B</text>
<path d="M913.3 163.1 Q918.7 170.35 913.3 177.6" class="pl"/>
<text transform="translate(849.02 190.7) rotate(.03) scale(1 .97)" class="v">points<tspan dy="2.4" class="us">_</tspan><tspan dy="-2.4">joined</tspan></text>
<text transform="translate(947.06 191.18) rotate(.03) scale(1.23 0.93)" class="fheavy">=</text>
<text transform="translate(958.13 190.7) rotate(.03) scale(1 .97)" class="v">true</text>
<text transform="translate(849.02 207.6) rotate(.03) scale(1 .97)" class="v">points</text>
<path d="M900.2 197.3 Q895.6 204.55 900.2 211.8" class="pl"/>
<text transform="translate(902.37 207.6) rotate(.03) scale(1 .97)" class="v">B</text>
<path d="M913.3 197.3 Q918.7 204.55 913.3 211.8" class="pl"/>
<text transform="translate(849.14 224.27) rotate(.03) scale(1 .97)" class="v">color</text>
<text transform="translate(889.26 224.18) rotate(.03) scale(1.23 0.93)" class="fheavy">=</text>
<text transform="translate(901.54 224.27) rotate(.03) scale(1 .97)" class="v">green</text>
<text transform="translate(849.33 240.94) rotate(.03) scale(1 .97)" class="v">nticks</text>
<text transform="translate(896.06 241.18) rotate(.03) scale(1.23 0.93)" class="fheavy">=</text>
<text transform="translate(907.7 241.64) rotate(.03) scale(1 .97)" class="f">50</text>
<text transform="translate(848.62 275.75) rotate(.03) scale(1 .97)" class="v">parametric</text>
<path d="M928.9 248.3 C927.01 251.45 926.2 253.7 926.2 257.3 L926.2 293.6 C926.2 297.2 927.01 299.45 928.9 302.6" class="pl"/>
<text transform="translate(932.92 259.3) rotate(.03) scale(1 .97)" class="v">px</text>
<text transform="translate(947.4 263) rotate(.03)" class="sub">0</text>
<path d="M961.3 249 C959.69 251.56 959 253.4 959 256.33 L959 263.87 C959 266.8 959.69 268.64 961.3 271.2" class="pl"/>
<text transform="translate(963.21 259.3) rotate(.03) scale(1 .97)" class="v">T<tspan dy="2.4" class="us">_</tspan><tspan dy="-2.4">sat</tspan></text>
<text transform="translate(1004.23 268.2) rotate(.03) scale(1 .97)" class="v">n</text>
<path d="M1014.4 249 C1016.15 251.56 1016.9 253.4 1016.9 256.33 L1016.9 263.87 C1016.9 266.8 1016.15 268.64 1014.4 271.2" class="pl"/>
<path d="M931.6 272.2H1018.8" class="fb"/>
<text transform="translate(963.45 284.9) rotate(.03) scale(1 .97)" class="u">bar</text>
<text transform="translate(1019.9 276.55) rotate(.03) scale(1 .97)" class="f">;</text>
<text transform="translate(1032.51 259.6) rotate(.03) scale(1 .97)" class="v">T<tspan dy="2.4" class="us">_</tspan><tspan dy="-2.4">sat</tspan></text>
<text transform="translate(1073.53 268.5) rotate(.03) scale(1 .97)" class="v">n</text>
<path d="M1031.9 272.2H1083.2" class="fb"/>
<text transform="translate(1049.9 284.8) rotate(.03) scale(1 .97)" class="u">°C</text>
<text transform="translate(1083.4 276.55) rotate(.03) scale(1 .97)" class="f">;</text>
<text transform="translate(1096.63 259) rotate(.03) scale(1 .97)" class="v">hx</text>
<text transform="translate(1111 262.7) rotate(.03)" class="sub">0</text>
<path d="M1125.1 249 C1123.42 251.54 1122.7 253.36 1122.7 256.26 L1122.7 263.74 C1122.7 266.64 1123.42 268.46 1125.1 271" class="pl"/>
<text transform="translate(1127.11 259) rotate(.03) scale(1 .97)" class="v">T<tspan dy="2.4" class="us">_</tspan><tspan dy="-2.4">sat</tspan></text>
<text transform="translate(1168.13 268.2) rotate(.03) scale(1 .97)" class="v">n</text>
<path d="M1178.1 249 C1179.85 251.54 1180.6 253.36 1180.6 256.26 L1180.6 263.74 C1180.6 266.64 1179.85 268.46 1178.1 271" class="pl"/>
<path d="M1095.7 272.1H1182.7" class="fb"/>
<text transform="translate(1134.97 284.5) rotate(.03) scale(1 .97)" class="u">J</text>
<path d="M1131.4 287.6H1147" class="fb"/>
<text transform="translate(1131.82 299.5) rotate(.03) scale(1 .97)" class="u">kg</text>
<text transform="translate(1183.5 276.55) rotate(.03) scale(1 .97)" class="f">;</text>
<text transform="translate(1194.91 275.75) rotate(.03) scale(1 .97)" class="v">T<tspan dy="2.4" class="us">_</tspan><tspan dy="-2.4">sat</tspan></text>
<text transform="translate(1232.4 276.55) rotate(.03) scale(1 .97)" class="f">;</text>
<text transform="translate(1242.9 276.55) rotate(.03) scale(1 .97)" class="f">0,1</text>
<text transform="translate(1264.5 276.55) rotate(.03) scale(1 .97)" class="f">;</text>
<text transform="translate(1277.71 268.5) rotate(.03) scale(1 .97)" class="v">T<tspan dy="2.4" class="us">_</tspan><tspan dy="-2.4">crit</tspan></text>
<path d="M1276.7 272.1H1322.9" class="fb"/>
<text transform="translate(1292.3 284.8) rotate(.03) scale(1 .97)" class="u">°C</text>
<path d="M1325.8 248.3 C1327.62 251.45 1328.4 253.7 1328.4 257.3 L1328.4 293.6 C1328.4 297.2 1327.62 299.45 1325.8 302.6" class="pl"/>
<text transform="translate(847.42 316.85) rotate(.03) scale(1 .97)" class="v">line<tspan dy="2.4" class="us">_</tspan><tspan dy="-2.4">width</tspan></text>
<text transform="translate(924.96 317.18) rotate(.03) scale(1.23 0.93)" class="fheavy">=</text>
<text transform="translate(936.3 317.55) rotate(.03) scale(1 .97)" class="f">2</text>
<path d="M827.6 433H835.2M831.4 429.2V436.8" stroke="#f01818" stroke-width="1.1"/>
</g>
<g id="plot-region">
<rect x="894.7" y="406.8" width="533.7" height="486.6" fill="#fff"/>
<defs><linearGradient id="cb" x1="0" y1="0" x2="0" y2="1"><stop offset="0" stop-color="#ffff00"/><stop offset="0.05" stop-color="#f9db00"/><stop offset="0.1" stop-color="#f2ba00"/><stop offset="0.15" stop-color="#eb9d00"/><stop offset="0.2" stop-color="#e48300"/><stop offset="0.25" stop-color="#dd6c00"/><stop offset="0.3" stop-color="#d55700"/><stop offset="0.35" stop-color="#ce4600"/><stop offset="0.4" stop-color="#c63700"/><stop offset="0.45" stop-color="#bd2a00"/><stop offset="0.5" stop-color="#b42000"/><stop offset="0.55" stop-color="#ab174f"/><stop offset="0.6" stop-color="#a11096"/><stop offset="0.65" stop-color="#970bce"/><stop offset="0.7" stop-color="#8c07f3"/><stop offset="0.75" stop-color="#8004ff"/><stop offset="0.8" stop-color="#7202f3"/><stop offset="0.85" stop-color="#6301ce"/><stop offset="0.9" stop-color="#510096"/><stop offset="0.95" stop-color="#39004f"/><stop offset="1" stop-color="#000000"/></linearGradient><linearGradient id="gp" gradientUnits="userSpaceOnUse" x1="1251" y1="560" x2="1356" y2="650"><stop offset="0" stop-color="#4a00a6"/><stop offset="0.5" stop-color="#3c008c"/><stop offset="1" stop-color="#2c0064"/></linearGradient><linearGradient id="gr" gradientUnits="userSpaceOnUse" x1="1256" y1="515" x2="1348" y2="628"><stop offset="0" stop-color="#8a3c00"/><stop offset="0.3" stop-color="#762400"/><stop offset="0.6" stop-color="#681400"/><stop offset="0.82" stop-color="#641024"/><stop offset="1" stop-color="#600c44"/></linearGradient><linearGradient id="gy" gradientUnits="userSpaceOnUse" x1="1262" y1="512" x2="1342" y2="602"><stop offset="0" stop-color="#989900"/><stop offset="0.3" stop-color="#969200"/><stop offset="0.5" stop-color="#8f7400"/><stop offset="0.75" stop-color="#8a5200"/><stop offset="1" stop-color="#7a3800"/></linearGradient></defs>
<path d="M999.4 650.9L1246.4 589.5M1033 675.4L1280 614M1066.6 699.9L1313.6 638.5M1100.2 724.4L1347.2 663M990.5 620.26L1134 725.76M1015.2 614.12L1158.7 719.62M1039.9 607.98L1183.4 713.48M1064.6 601.84L1208.1 707.34M1089.3 595.7L1232.8 701.2M1114 589.56L1257.5 695.06M1138.7 583.42L1282.2 688.92M1163.4 577.28L1306.9 682.78M1188.1 571.14L1331.6 676.64" fill="none" stroke="#c9c9c9" stroke-width="0.8"/>
<path d="M1212.8 565L965.8 626.4L1109.3 731.9L1356.3 670.5" fill="none" stroke="#1a1a1a" stroke-width="1.15"/>
<path d="M999.4 650.9l4.45 -1.11M1246.4 589.5l-4.45 1.11M1033 675.4l4.45 -1.11M1280 614l-4.45 1.11M1066.6 699.9l4.45 -1.11M1313.6 638.5l-4.45 1.11M1100.2 724.4l4.45 -1.11M1347.2 663l-4.45 1.11M965.8 626.4l4.03 2.94M1109.3 731.9l-4.03 -2.94M990.5 620.26l4.03 2.94M1134 725.76l-4.03 -2.94M1015.2 614.12l4.03 2.94M1158.7 719.62l-4.03 -2.94M1039.9 607.98l4.03 2.94M1183.4 713.48l-4.03 -2.94M1064.6 601.84l4.03 2.94M1208.1 707.34l-4.03 -2.94M1089.3 595.7l4.03 2.94M1232.8 701.2l-4.03 -2.94M1114 589.56l4.03 2.94M1257.5 695.06l-4.03 -2.94M1138.7 583.42l4.03 2.94M1282.2 688.92l-4.03 -2.94M1163.4 577.28l4.03 2.94M1306.9 682.78l-4.03 -2.94M1188.1 571.14l4.03 2.94M1331.6 676.64l-4.03 -2.94M1212.8 565l4.03 2.94M1356.3 670.5l-4.03 -2.94" fill="none" stroke="#1a1a1a" stroke-width="1"/>
<path d="M965.8 520.6V732.6M965.8 541.6h4.2M965.8 584h4.2M965.8 626.4h4.2M965.8 669.1h4.2M965.8 711.3h4.2" fill="none" stroke="#1a1a1a" stroke-width="1.1"/>
<polygon points="1227,470.4 1254.8,490.8 1254.8,497 1257.8,498.5 1258.1,504.4 1336.1,570.5 1338.5,585.3 1344.1,613.6 1349.4,641.8 1355.7,670.3 1256.1,595.9 1227,573.4" fill="#989900"/>
<polygon points="1258.1,504.4 1306.9,545.6 1325,570 1338.5,585.3 1344.1,613.6 1323.9,591.5 1303.6,567.5 1293.2,555.5 1278.8,539 1271,528.5 1264.4,518.8 1259,510.5" fill="url(#gy)"/>
<polygon points="1254,501.5 1259,510.5 1264.4,518.8 1271,528.5 1278.8,539 1293.2,555.5 1303.6,567.5 1323.9,591.5 1344.1,613.6 1349.4,641.8 1335.2,628.8 1312.6,608 1290,587.6 1278.8,577.5 1264.4,561.5 1262,560" fill="url(#gr)"/>
<polygon points="1251.2,543.6 1257.5,552.5 1264.4,561.5 1278.8,577.5 1290,587.6 1312.6,608 1335.2,628.8 1349.4,641.8 1355.7,670.3 1256.1,595.9" fill="url(#gp)"/>
<path d="M1212.8 565L1356.3 670.5" fill="none" stroke="#1a1a1a" stroke-width="1.15"/>
<g class="pt"><text x="957.9" y="544.9" text-anchor="end">4</text><text x="957.9" y="587.3" text-anchor="end">2</text><text x="957.9" y="629.7" text-anchor="end">0</text><text x="957.9" y="672.4" text-anchor="end">-2</text><text x="957.9" y="714.6" text-anchor="end">-4</text><text x="960.6" y="631.4" text-anchor="end">0</text><text x="992.6" y="656.8" text-anchor="end">50</text><text x="1026.2" y="681.3" text-anchor="end">100</text><text x="1059.8" y="705.8" text-anchor="end">150</text><text x="1093.4" y="730.3" text-anchor="end">200</text><text x="1110.9" y="739.4" text-anchor="middle">0</text><text x="1135.6" y="733.26" text-anchor="middle">50</text><text x="1160.3" y="727.12" text-anchor="middle">100</text><text x="1185" y="720.98" text-anchor="middle">150</text><text x="1209.7" y="714.84" text-anchor="middle">200</text><text x="1234.4" y="708.7" text-anchor="middle">250</text><text x="1259.1" y="702.56" text-anchor="middle">300</text><text x="1283.8" y="696.42" text-anchor="middle">350</text><text x="1308.5" y="690.28" text-anchor="middle">400</text><text x="1333.2" y="684.14" text-anchor="middle">450</text><text x="1357.9" y="678" text-anchor="middle">500</text><text x="930.6" y="629.6" text-anchor="middle">z</text><text x="998.6" y="692" text-anchor="middle">x</text><text x="1254.2" y="720.6" text-anchor="middle">y</text></g>
<rect x="1362.9" y="527.3" width="20.1" height="156.9" fill="url(#cb)" stroke="#000" stroke-width="1.1"/>
<path d="M1383 684.2h-4M1362.9 684.2h4M1383 668.51h-4M1362.9 668.51h4M1383 652.82h-4M1362.9 652.82h4M1383 637.13h-4M1362.9 637.13h4M1383 621.44h-4M1362.9 621.44h4M1383 605.75h-4M1362.9 605.75h4M1383 590.06h-4M1362.9 590.06h4M1383 574.37h-4M1362.9 574.37h4M1383 558.68h-4M1362.9 558.68h4M1383 542.99h-4M1362.9 542.99h4M1383 527.3h-4M1362.9 527.3h4" fill="none" stroke="#000" stroke-width="1"/>
<g class="pt"><text x="1387.4" y="687.5">0</text><text x="1387.4" y="671.81">0.5</text><text x="1387.4" y="656.12">1</text><text x="1387.4" y="640.43">1.5</text><text x="1387.4" y="624.74">2</text><text x="1387.4" y="609.05">2.5</text><text x="1387.4" y="593.36">3</text><text x="1387.4" y="577.67">3.5</text><text x="1387.4" y="561.98">4</text><text x="1387.4" y="546.29">4.5</text><text x="1387.4" y="530.6">5</text></g>
<path d="M896.5 888.5H1425" fill="none" stroke="#3a3a3a" stroke-width="1.1"/>
<path d="M1424.9 409V888.5" fill="none" stroke="#8c8c8c" stroke-width="1.5"/>
<rect x="896.6" y="408.5" width="530" height="484.2" fill="none" stroke="#000" stroke-width="1.2"/>
<path d="M896 892.75H1427.2" fill="none" stroke="#111" stroke-width="1.5"/>
<text x="897.3" y="906.8" class="v">H</text>
</g>
</svg>
</body>
</html>
